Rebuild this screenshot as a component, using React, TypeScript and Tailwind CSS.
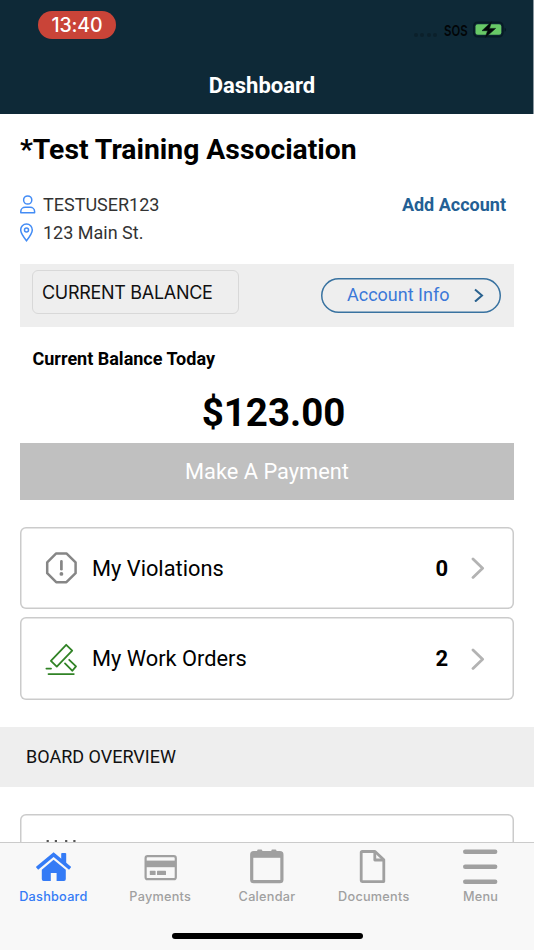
import type { ReactNode } from "react";

function StatusBar() {
  return (
    <div className="flex h-[57px] items-start justify-between pl-[38px] pr-[25px] pt-[10px]">
      <div className="mt-[0.5px] flex h-[28.5px] w-[78px] items-center justify-center rounded-full bg-[#c94438] pt-px font-[Inter] text-[19.5px] font-medium leading-none tracking-[-0.1px] text-white">
        13:40
      </div>
      <div className="mt-[10px] flex h-5 items-center">
        <div className="mt-[9px] flex gap-[2.5px]">
          {[0, 1, 2, 3].map((i) => (
            <span key={i} className="size-[4px] rounded-full bg-[#0b202b]" />
          ))}
        </div>
        <span className="ml-[7px] w-[23px] origin-left scale-x-[0.76] pt-px font-[Inter] text-[15px] font-semibold leading-none text-[#020507]">
          SOS
        </span>
        <svg className="ml-[6px]" width="35" height="18" viewBox="0 0 35 18" fill="none">
          <rect x="0.8" y="1.3" width="29" height="14.4" rx="4" stroke="#071a25" strokeWidth="1.7" />
          <rect x="2.5" y="3.2" width="25.8" height="10.6" rx="2.2" fill="#68c967" />
          <path d="M31.6 6.7C33.6 7.5 33.6 10 31.6 10.8Z" fill="#071a25" />
          <path d="M18.5 0.7L9 9.7H14.6L12.1 16.8L22.6 7.4H16.5Z" fill="#020507" stroke="#0a1a1b" strokeWidth="0.6" />
        </svg>
      </div>
    </div>
  );
}

function Card({ icon, label, count }: { icon: ReactNode; label: string; count: number }) {
  return (
    <div className="flex h-[82.4px] items-center rounded-[6px] bg-white pl-[25px] pr-[29px] shadow-[inset_0_0_0_1.5px_#cbcbcb]">
      {icon}
      <span className="ml-[13px] pt-px text-[21.8px] leading-none text-black">{label}</span>
      <span className="ml-auto pt-px text-[22px] font-bold leading-none text-black">{count}</span>
      <svg className="ml-[23px]" width="14" height="22" viewBox="0 0 14 22" fill="none">
        <path d="M2 2L11.6 11.2L2 20.4" stroke="#b3b3b3" strokeWidth="2.8" strokeLinecap="round" strokeLinejoin="round" />
      </svg>
    </div>
  );
}

function AlertIcon() {
  return (
    <svg width="34" height="34" viewBox="0 0 34 34" fill="none" stroke="#868686">
      <path d="M11.2 2.4H21.4L30.6 11.4V22.2L21.4 31.2H11.2L2.2 22.2V11.4Z" strokeWidth="2.5" strokeLinejoin="round" />
      <path d="M16.4 10.4V18.2" strokeWidth="2.7" strokeLinecap="round" />
      <circle cx="16.4" cy="22.9" r="1.9" fill="#868686" stroke="none" />
    </svg>
  );
}

function GavelIcon() {
  return (
    <svg width="34" height="34" viewBox="0 0 34 34" fill="none" stroke="#318326" strokeWidth="1.8" strokeLinecap="round" strokeLinejoin="round">
      <path d="M21.2 2.8L27.2 8.7L11.8 24.6L5.9 18.8Z" />
      <path d="M24.2 17.8L31 24.4L27.4 28.8L20 21.4" />
      <path d="M1.4 26.6H6" />
      <path d="M3.5 32.1H28.8" strokeWidth="1.8" />
    </svg>
  );
}

function HomeIcon() {
  return (
    <svg width="36" height="36" viewBox="0 0 36 36" fill="#347bf6">
      <path d="M3.4 18.2L18.6 5.6L33.8 18.2" fill="none" stroke="#347bf6" strokeWidth="3.6" strokeLinecap="square" />
      <path d="M26.2 4.8Q26.2 3.9 27.2 3.9H30.2Q31.2 3.9 31.2 4.8V16L26.2 12Z" />
      <path d="M18.6 10.8L30.8 20.8V30Q30.8 32 29 32H21.6V24H15.8V32H8.6Q6.8 32 6.8 30V20.8Z" />
    </svg>
  );
}

function CardIcon() {
  return (
    <svg width="36" height="36" viewBox="0 0 36 36" fill="#a0a0a0">
      <rect x="3.6" y="7.2" width="30.2" height="23" rx="2" fill="none" stroke="#a0a0a0" strokeWidth="2.2" />
      <path d="M3.6 11.6H33.6V18.2H3.6Z" />
      <rect x="7.8" y="21.8" width="5.8" height="4.2" rx="0.6" />
      <rect x="15" y="21.8" width="9" height="4.2" rx="0.6" />
    </svg>
  );
}

function CalendarIcon() {
  return (
    <svg width="36" height="36" viewBox="0 0 36 36" fill="#a0a0a0">
      <rect x="2.7" y="3.7" width="30.2" height="29" rx="2" fill="none" stroke="#a0a0a0" strokeWidth="3.2" />
      <path d="M2.4 3H33.4V8.8H2.4Z" />
      <rect x="8.2" y="0.6" width="5" height="4" rx="1" />
      <rect x="22.4" y="0.6" width="5" height="4" rx="1" />
    </svg>
  );
}

function DocumentIcon() {
  return (
    <svg width="36" height="36" viewBox="0 0 36 36" fill="none" stroke="#a0a0a0" strokeWidth="2.8" strokeLinejoin="round">
      <path d="M6.2 2.5H19L27.8 10.7V32.6H6.2Q5.2 32.6 5.2 31.6V3.5Q5.2 2.5 6.2 2.5Z" />
      <path d="M18.8 2.5V11H27.8" />
    </svg>
  );
}

function MenuIcon() {
  return (
    <svg width="36" height="36" viewBox="0 0 36 36" fill="none" stroke="#a0a0a0" strokeWidth="4.4" strokeLinecap="round">
      <path d="M2.2 2.8H32.2M2.2 17.8H32.2M2.2 32.7H32.2" />
    </svg>
  );
}

const tabs = [
  { label: "Dashboard", icon: <HomeIcon />, style: "text-[#347bf6]" },
  { label: "Payments", icon: <CardIcon />, style: "text-[#a0a0a0]" },
  { label: "Calendar", icon: <CalendarIcon />, style: "text-[#a0a0a0]" },
  { label: "Documents", icon: <DocumentIcon />, style: "text-[#a0a0a0]" },
  { label: "Menu", icon: <MenuIcon />, style: "text-[#a0a0a0]" },
];

export default function App() {
  return (
    <div className="flex h-[950px] w-[534px] flex-col overflow-hidden bg-white font-[Roboto,sans-serif]">
      <header className="h-[114px] shrink-0 border-r border-[#8c99a1] bg-[#0e2937]">
        <StatusBar />
        <h1 className="flex h-[57px] items-center justify-center pr-[9px] text-[22px] font-bold leading-none text-white">Dashboard</h1>
      </header>

      <main className="h-[728px] shrink-0 overflow-hidden">
        <section className="px-5">
          <h2 className="pt-[20px] text-[28.3px] font-bold leading-[32px] text-black">*Test Training Association</h2>
          <div className="mt-[24px] flex justify-between pr-[8px]">
            <div className="text-[18px] leading-[28px] text-[#333333]">
              <div className="flex items-center gap-[7px]">
                <svg width="16" height="20" viewBox="0 0 16 20" fill="none" stroke="#438cf5" strokeWidth="1.5">
                  <circle cx="7.7" cy="5" r="4.1" />
                  <path d="M0.8 17.8V16.5C0.8 14.1 2.9 12.3 5.2 12.3H10.2C12.5 12.3 14.6 14.1 14.6 16.5V17.8Z" strokeLinejoin="round" />
                </svg>
                <span className="pt-px">TESTUSER123</span>
              </div>
              <div className="flex items-center gap-[7px]">
                <svg width="16" height="20" viewBox="0 0 16 20" fill="none" stroke="#438cf5" strokeWidth="1.5">
                  <path d="M6.5 17.8C3.4 13.8 0.7 10 0.7 7C0.7 3.6 3.2 1 6.5 1S12.3 3.6 12.3 7C12.3 10 9.6 13.8 6.5 17.8Z" />
                  <circle cx="6.5" cy="7" r="2" />
                </svg>
                <span>123 Main St.</span>
              </div>
            </div>
            <span className="text-[18px] font-bold leading-[29px] text-[#235f94]">Add Account</span>
          </div>

          <div className="mt-[17px] flex h-[63px] bg-[#eeeeee] pl-[12px] pr-[13px]">
            <div className="mt-[6px] flex h-[44px] w-[207px] items-center rounded-[6px] border border-[#d8d8d8] pl-[9px] pt-[2px] font-[Inter] text-[18px] leading-none tracking-[-0.3px] text-[#111111]">
              CURRENT BALANCE
            </div>
            <div className="ml-auto mt-[14px] flex h-[34.5px] w-[180px] items-center rounded-full pl-[26px] text-[18px] leading-none text-[#3b78d8] shadow-[inset_0_0_0_1.5px_#3872a0]">
              Account Info
              <svg className="ml-auto mr-[16px]" width="12" height="14" viewBox="0 0 12 14" fill="none">
                <path d="M2 1.6L9 7.6L2 13.6" stroke="#2a628f" strokeWidth="2" />
              </svg>
            </div>
          </div>

          <h3 className="ml-[12.5px] mt-[22px] text-[18px] font-bold leading-[20px] text-black">Current Balance Today</h3>
          <div className="mt-[20px] h-[48px] pl-[13px] text-center text-[38.5px] font-bold leading-[48px] text-black">$123.00</div>
          <div className="mt-[6px] flex h-[57px] items-center justify-center bg-[#c0c0c0] text-[21.8px] leading-none text-white">Make A Payment</div>

          <div className="mt-[27px] flex flex-col gap-[8px]">
            <Card icon={<AlertIcon />} label="My Violations" count={0} />
            <Card icon={<GavelIcon />} label="My Work Orders" count={2} />
          </div>
        </section>

        <div className="mt-[27.2px] flex h-[60px] items-center bg-[#eeeeee] pl-[26px] text-[18px] leading-none text-[#111111]">BOARD OVERVIEW</div>

        <div className="mx-5 mt-[27px] h-[80px] rounded-[6px] pl-[26px] pt-[26px] shadow-[inset_0_0_0_1.5px_#cbcbcb]">
          <svg width="32" height="6" viewBox="0 0 32 6" fill="#555555">
            <path d="M0.6 0H2.8V6H0.6ZM8.8 0H11V6H8.8ZM19.1 0H21.3V6H19.1ZM27.3 0H29.5V6H27.3Z" />
          </svg>
        </div>
      </main>

      <footer className="flex h-[108px] shrink-0 flex-col items-center border-t border-[#cbcbcb] bg-[#f8f8f8]">
        <nav className="grid w-full grid-cols-5">
          {tabs.map((tab) => (
            <div key={tab.label} className={`flex flex-col items-center pt-[6px] ${tab.style}`}>
              {tab.icon}
              <span className="mt-[4px] font-[Inter] text-[12.7px] font-medium leading-[16px] tracking-[0.25px]">{tab.label}</span>
            </div>
          ))}
        </nav>
        <div className="mt-[28px] h-[6px] w-[191px] rounded-full bg-black" />
      </footer>
    </div>
  );
}
